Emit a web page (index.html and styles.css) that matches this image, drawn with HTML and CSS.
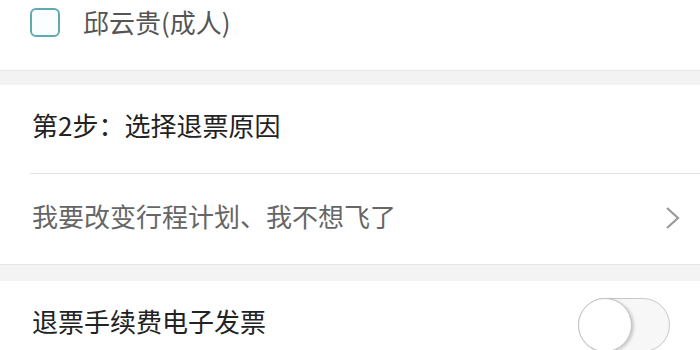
FILE: index.html
```html
<!DOCTYPE html>
<html lang="zh">
<head>
<meta charset="utf-8">
<link rel="stylesheet" href="styles.css">
</head>
<body>
<div class="page">
  <section class="card card-top">
    <div class="row passenger">
      <span class="checkbox"></span>
      <span class="name">邱云贵(成人)</span>
    </div>
  </section>
  <div class="gap gap1"></div>
  <section class="card">
    <div class="row step">第2步：选择退票原因</div>
    <div class="divider"></div>
    <div class="row reason">
      <span>我要改变行程计划、我不想飞了</span>
      <svg class="chevron" width="16" height="24" viewBox="0 0 16 24"><path d="M2 2 L13 12 L2 22" fill="none" stroke="#9a9a9a" stroke-width="2.2"/></svg>
    </div>
  </section>
  <div class="gap gap2"></div>
  <section class="card">
    <div class="row invoice">
      <span>退票手续费电子发票</span>
      <span class="toggle"><span class="knob"></span></span>
    </div>
  </section>
</div>
</body>
</html>
```

FILE: styles.css
```css
html, body {
  margin: 0;
  padding: 0;
  background: #ffffff;
}
body {
  font-family: "Noto Sans CJK SC", "Noto Sans", sans-serif;
  font-size: 26px;
  overflow: hidden;
  width: 700px;
  height: 350px;
}
.page {
  display: flex;
  flex-direction: column;
}
.card {
  background: #ffffff;
}
.card-top {
  height: 70px;
}
.row {
  display: flex;
  align-items: center;
}
.passenger {
  height: 44px;
  padding-left: 30px;
  color: #555555;
}
.checkbox {
  width: 26px;
  height: 25px;
  border: 2px solid #5fa9b1;
  border-radius: 6px;
  box-sizing: content-box;
  margin-right: 23px;
  background: #fbfeff;
}
.name {
  line-height: 1;
}
.gap {
  background: #f3f3f3;
  border-top: 1px solid #e6e6e6;
  box-sizing: border-box;
}
.gap1 {
  height: 15px;
}
.gap2 {
  height: 17px;
}
.step {
  height: 88px;
  padding-left: 32px;
  color: #222222;
  padding-bottom: 10px;
  box-sizing: border-box;
}
.divider {
  height: 1px;
  background: #e3e3e3;
  margin-left: 30px;
}
.reason {
  height: 90px;
  padding-left: 32px;
  padding-right: 19px;
  justify-content: space-between;
  color: #666666;
  padding-bottom: 8px;
  box-sizing: border-box;
}
.chevron {
  display: block;
  margin-top: 6px;
}
.invoice {
  height: 80px;
  padding-left: 32px;
  padding-right: 30px;
  justify-content: space-between;
  color: #222222;
  align-items: flex-start;
  padding-top: 22px;
  box-sizing: border-box;
}
.invoice > span:first-child {
  line-height: 36px;
}
.toggle {
  position: relative;
  width: 92px;
  height: 54px;
  margin-top: -5px;
  border: 1.5px solid #c8c8c8;
  border-radius: 28px;
  background: #f7f7f7;
  box-sizing: border-box;
}
.knob {
  position: absolute;
  left: -1.5px;
  top: -1.5px;
  width: 54px;
  height: 54px;
  border-radius: 50%;
  background: #ffffff;
  border: 1.5px solid #c4c4c4;
  box-sizing: border-box;
  box-shadow: 2px 1px 3px rgba(0,0,0,0.18);
}
```
